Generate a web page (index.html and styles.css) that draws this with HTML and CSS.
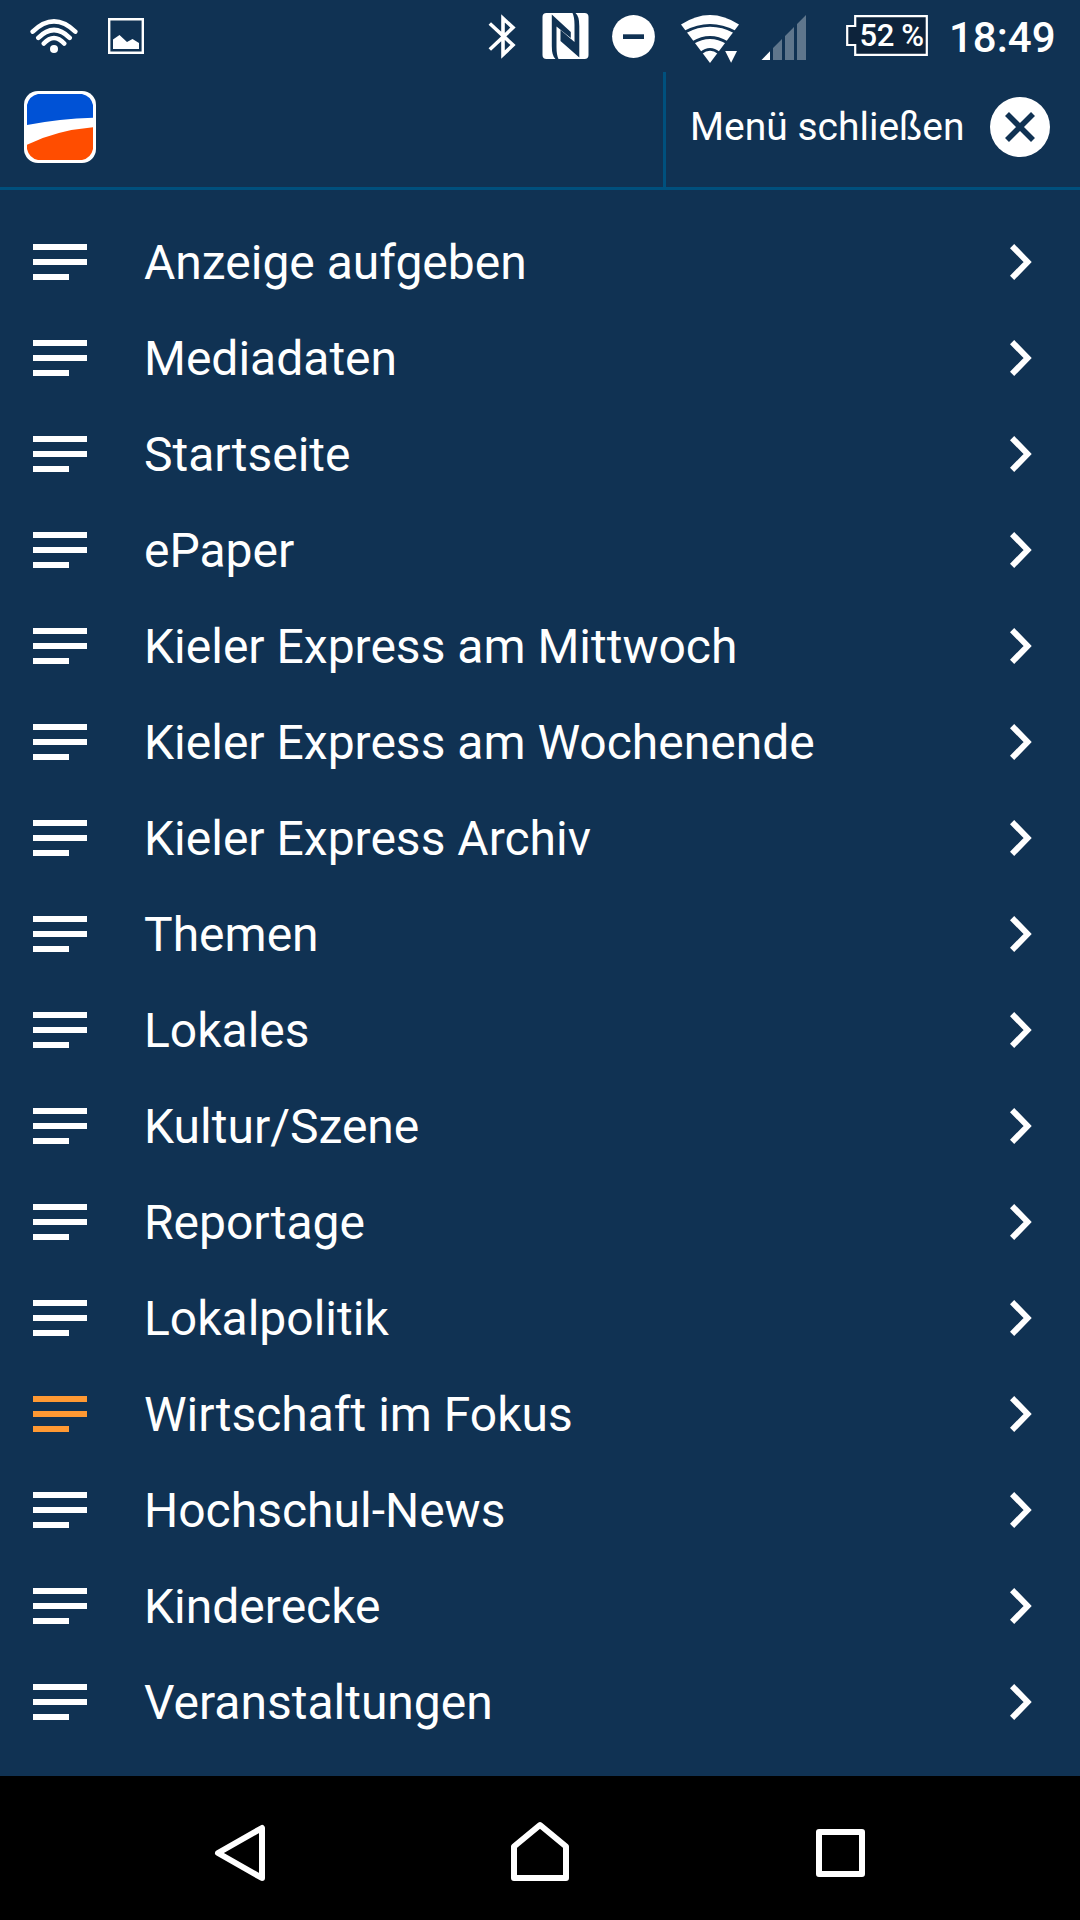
FILE: index.html
```html
<!DOCTYPE html>
<html lang="de">
<head>
<meta charset="utf-8">
<title>Kieler Express</title>
<link rel="stylesheet" href="styles.css">
</head>
<body>
<div class="statusbar">
  <div class="status-group">
    <svg width="48" height="72" viewBox="30 0 48 72" fill="none" stroke="#fff" stroke-width="4.6" stroke-linecap="round"><path d="M32.7 31.6Q54 11.2 75.3 31.6M38.3 37.8Q54 22.2 69.7 37.8M43.8 43.5Q54 32.4 64.2 43.5"/><circle cx="54" cy="49" r="4" fill="#fff" stroke="none"/></svg>
    <svg width="36" height="72" viewBox="108 0 36 72"><path d="M109.2 19.2H142.8V52.8H109.2Z" fill="none" stroke="#fff" stroke-width="2.4"/><path d="M113 39.5L119.5 35L127 42L132.5 39L139 43V49H113Z" fill="#fff"/></svg>
  </div>
  <div class="status-group status-right">
    <svg width="28" height="72" viewBox="488 0 28 72" fill="none" stroke="#fff" stroke-width="3.6"><path d="M489.8 23.5L513 45L503 54.6V18.4L513 27.6L489.8 49.5"/></svg>
    <svg class="nfc" width="47" height="72" viewBox="541.5 0 47 72"><rect x="542" y="13" width="46" height="46" rx="4" fill="#fff"/><path d="M551.3 14.5L570.3 32V38L556 26.5V47Q556 55 558 59H555Q551.3 56 551.3 46ZM560 30L574 42V25Q574 17 572 13H575Q578.8 16 578.8 26V57.5L560 41Z" fill="#103253"/></svg>
    <svg width="43" height="72" viewBox="612 0 43 72"><circle cx="633.5" cy="36.5" r="21.4" fill="#fff"/><path d="M623 34.3H644V39H623Z" fill="#103253"/></svg>
    <svg class="wifi" width="58" height="72" viewBox="681 0 58 72"><path d="M681 24.5Q710 5.5 739 24.5L710 63Z" fill="#fff"/><path d="M685 32Q710 18.8 735 32M693 42.5Q710 32.5 727 42.5M701 53Q710 45.7 719 53" fill="none" stroke="#103253" stroke-width="2.8"/><path d="M725.2 51H737L731.1 62.8Z" fill="#fff"/></svg>
    <svg class="signal" width="45" height="72" viewBox="761 0 45 72"><path d="M761.5 60L770 51.3V60Z" fill="#fff"/><path d="M773 48L782 39V60H773ZM785 36L794 27V60H785ZM797 24L806 15V60H797Z" fill="#5f768c"/></svg>
    <div class="battery"><svg width="82" height="72" viewBox="846 0 82 72"><path d="M855.2 16.2H926.8V54.8H855.2V45H847.2V26H855.2Z" fill="#0d233b" stroke="#fff" stroke-width="2.2"/></svg><span class="level">52 %</span></div>
    <span class="clock">18:49</span>
  </div>
</div>

<header class="header">
  <svg class="logo" width="72" height="72" viewBox="0 0 72 72"><rect width="72" height="72" rx="14" fill="#fff"/><path d="M3 34V14Q5 5 14 3H58Q67 5 69 14V26.7Q36 27.5 3 34Z" fill="#0052d6"/><path d="M3 53.7Q32 39.5 69 36.3V58Q67 67 58 69H14Q5 67 3 58Z" fill="#ff4d00"/></svg>
  <div class="close">
    <span class="close-label">Menü schließen</span>
    <svg width="60" height="60" viewBox="0 0 60 60"><circle cx="30" cy="30" r="30" fill="#fff"/><path d="M17 17L43 43M43 17L17 43" stroke="#103253" stroke-width="5.6"/></svg>
  </div>
</header>

<svg class="defs" width="0" height="0">
  <symbol id="lines" viewBox="0 0 54 36"><path d="M0 0H54V6H0ZM0 15H54V21H0ZM0 30H36V36H0Z" fill="currentColor"/></symbol>
  <symbol id="chevron" viewBox="0 0 22 36"><path d="M2.1 2.1L17.6 18L2.1 33.9" fill="none" stroke="currentColor" stroke-width="5.9"/></symbol>
</svg>
<ul class="menu">
  <li class="item"><svg class="lines"><use href="#lines"/></svg><span class="label">Anzeige aufgeben</span><svg class="chevron"><use href="#chevron"/></svg></li>
  <li class="item"><svg class="lines"><use href="#lines"/></svg><span class="label">Mediadaten</span><svg class="chevron"><use href="#chevron"/></svg></li>
  <li class="item"><svg class="lines"><use href="#lines"/></svg><span class="label">Startseite</span><svg class="chevron"><use href="#chevron"/></svg></li>
  <li class="item"><svg class="lines"><use href="#lines"/></svg><span class="label">ePaper</span><svg class="chevron"><use href="#chevron"/></svg></li>
  <li class="item"><svg class="lines"><use href="#lines"/></svg><span class="label">Kieler Express am Mittwoch</span><svg class="chevron"><use href="#chevron"/></svg></li>
  <li class="item"><svg class="lines"><use href="#lines"/></svg><span class="label">Kieler Express am Wochenende</span><svg class="chevron"><use href="#chevron"/></svg></li>
  <li class="item"><svg class="lines"><use href="#lines"/></svg><span class="label">Kieler Express Archiv</span><svg class="chevron"><use href="#chevron"/></svg></li>
  <li class="item"><svg class="lines"><use href="#lines"/></svg><span class="label">Themen</span><svg class="chevron"><use href="#chevron"/></svg></li>
  <li class="item"><svg class="lines"><use href="#lines"/></svg><span class="label">Lokales</span><svg class="chevron"><use href="#chevron"/></svg></li>
  <li class="item"><svg class="lines"><use href="#lines"/></svg><span class="label">Kultur/Szene</span><svg class="chevron"><use href="#chevron"/></svg></li>
  <li class="item"><svg class="lines"><use href="#lines"/></svg><span class="label">Reportage</span><svg class="chevron"><use href="#chevron"/></svg></li>
  <li class="item"><svg class="lines"><use href="#lines"/></svg><span class="label">Lokalpolitik</span><svg class="chevron"><use href="#chevron"/></svg></li>
  <li class="item"><svg class="lines active"><use href="#lines"/></svg><span class="label">Wirtschaft im Fokus</span><svg class="chevron"><use href="#chevron"/></svg></li>
  <li class="item"><svg class="lines"><use href="#lines"/></svg><span class="label">Hochschul-News</span><svg class="chevron"><use href="#chevron"/></svg></li>
  <li class="item"><svg class="lines"><use href="#lines"/></svg><span class="label">Kinderecke</span><svg class="chevron"><use href="#chevron"/></svg></li>
  <li class="item"><svg class="lines"><use href="#lines"/></svg><span class="label">Veranstaltungen</span><svg class="chevron"><use href="#chevron"/></svg></li>
</ul>

<nav class="navbar">
  <svg viewBox="190 1776 100 144"><path d="M218 1853L262 1828V1878Z"/></svg>
  <svg viewBox="490 1776 100 144"><path d="M514 1878V1846.5L540 1825L566 1846.5V1878Z"/></svg>
  <svg viewBox="790 1776 100 144"><path d="M819 1832H862V1874H819Z"/></svg>
</nav>
</body>
</html>
```
FILE: styles.css
```css
* { box-sizing: border-box; }
body {
  margin: 0;
  width: 1080px;
  height: 1920px;
  display: flex;
  flex-direction: column;
  overflow: hidden;
  background: #103253;
  color: #fff;
  font-family: Roboto, sans-serif;
}
svg { display: block; flex: none; }
.defs { display: none; }

.statusbar {
  height: 72px;
  padding: 0 24px 0 30px;
  display: flex;
  justify-content: space-between;
}
.status-group { display: flex; gap: 30px; }
.status-right { width: 568px; gap: 0; }
.status-right > svg + svg { margin-left: 25.5px; }
.status-right > svg.nfc + svg { margin-left: 23.5px; }
.status-right > svg + svg.wifi { margin-left: 26px; }
.status-right > svg + svg.signal { margin-left: 22px; }
.battery { display: grid; width: 82px; margin-left: 40px; }
.battery > * { grid-area: 1 / 1; }
.level {
  font-size: 31px;
  font-weight: 500;
  line-height: 72px;
  letter-spacing: -0.4px;
  padding-left: 13.5px;
  white-space: nowrap;
}
.clock {
  margin-left: 21px;
  font-size: 42px;
  font-weight: 500;
  line-height: 75px;
}

.header {
  height: 118px;
  border-bottom: 3px solid #00507d;
  display: flex;
  justify-content: space-between;
}
.logo { margin: 19px 0 0 24px; }
.close {
  width: 417px;
  height: 115px;
  border-left: 3px solid #00507d;
  padding: 0 30px 5px 24px;
  display: flex;
  align-items: center;
  justify-content: space-between;
}
.close-label { font-size: 39px; line-height: 46px; }

.menu {
  flex: 1;
  margin: 0;
  padding: 24px 48px 0 33px;
  list-style: none;
}
.item { height: 96px; display: flex; align-items: center; }
.lines { width: 54px; height: 36px; }
.active { color: #ff9933; }
.label {
  flex: 1;
  margin-left: 57px;
  padding-top: 2px;
  font-size: 48px;
  line-height: 94px;
}
.chevron { width: 22px; height: 36px; }

.navbar {
  height: 144px;
  padding: 0 190px;
  background: #000;
  display: flex;
  justify-content: space-between;
}
.navbar svg {
  width: 100px;
  height: 144px;
  fill: none;
  stroke: #fff;
  stroke-width: 6;
  stroke-linejoin: round;
}
```
